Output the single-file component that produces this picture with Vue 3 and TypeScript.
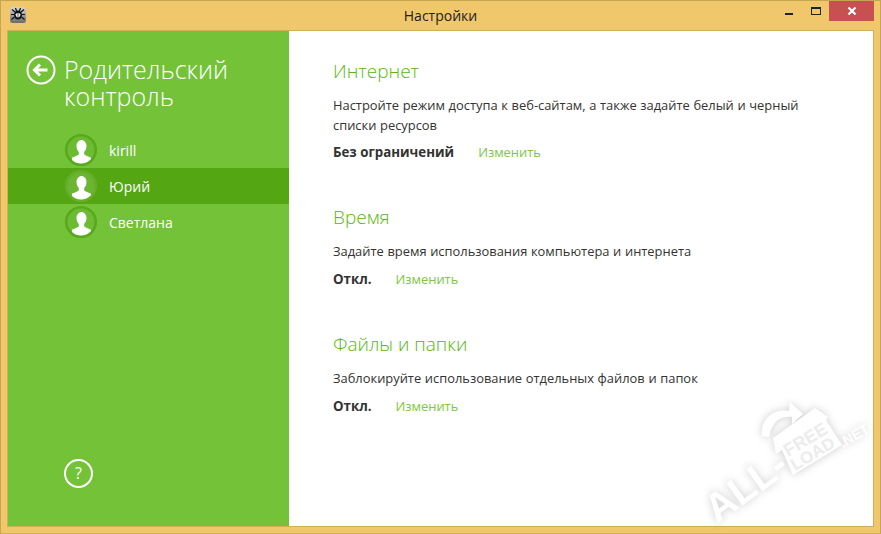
<script setup lang="ts">
interface User { name: string; active?: boolean }
interface Section { title: string; text: string[]; status: string }
const users: User[] = [{ name: 'kirill' }, { name: 'Юрий', active: true }, { name: 'Светлана' }]
const sections: Section[] = [
  { title: 'Интернет', text: ['Настройте режим доступа к веб-сайтам, а также задайте белый и черный', 'списки ресурсов'], status: 'Без ограничений' },
  { title: 'Время', text: ['Задайте время использования компьютера и интернета'], status: 'Откл.' },
  { title: 'Файлы и папки', text: ['Заблокируйте использование отдельных файлов и папок'], status: 'Откл.' },
]
</script>

<template>
  <div class="window">
    <header class="titlebar">
      <svg class="appicon" width="16" height="16" viewBox="0 0 16 16">
        <defs>
          <linearGradient id="tile" x1="0" y1="0" x2="0" y2="1">
            <stop offset="0" stop-color="#d8d8d8" />
            <stop offset="1" stop-color="#6a6a6a" />
          </linearGradient>
        </defs>
        <rect width="16" height="16" rx="2.500" fill="url(#tile)" />
        <path d="M2 2.500l3 2.500M14 2.500l-3 2.500M1 7.500h3.500M15 7.500h-3.500M1.500 12.500l3-2.500M14.500 12.500l-3-2.500M5.500 1l1 3M10.500 1l-1 3" stroke="#111" stroke-width="1.200" fill="none" />
        <ellipse cx="8" cy="8" rx="4" ry="4.500" fill="#111" />
        <path d="M5.500 7.500c1-2 4-2 5 0-.5 2-1 3-2.500 3s-2-1-2.500-3z" fill="#eee" />
        <path d="M8 5.500v5" stroke="#333" stroke-width=".8" />
      </svg>
      <div class="title">Настройки</div>
      <div class="controls">
        <div class="ctl"><span class="min"></span></div>
        <div class="ctl"><span class="max"></span></div>
        <div class="close">
          <svg width="10" height="10" viewBox="0 0 10 10"><path d="M1.500 1.500l7 7M8.500 1.500l-7 7" stroke="#fff" stroke-width="2.200" /></svg>
        </div>
      </div>
    </header>
    <div class="client">
      <aside class="side">
        <div class="head">
          <svg class="back" width="30" height="30" viewBox="0 0 30 30">
            <circle cx="15" cy="15" r="13.500" fill="none" stroke="#fff" stroke-width="2" />
            <path d="M21.500 15H9M14 9.500L8.500 15l5.500 5.500" fill="none" stroke="#fff" stroke-width="3" />
          </svg>
          <h1>Родительский<br />контроль</h1>
        </div>
        <ul class="users">
          <li v-for="u in users" :key="u.name" :class="{ active: u.active }">
            <svg class="avatar" width="34" height="34" viewBox="0 0 34 34">
              <defs><clipPath id="ac"><circle cx="17" cy="17" r="13.500" /></clipPath></defs>
              <circle cx="17" cy="17" r="14.800" :fill="u.active ? '#6cb532' : '#6dbb33'" :stroke="u.active ? '#64ae2a' : '#5aa91c'" stroke-width="2.600" />
              <g clip-path="url(#ac)">
                <path d="M17 7c3.300 0 5.500 2.700 5.500 6 0 2.400-1 4.700-2.300 5.900v2.500c1 1.200 5.400 2.200 6.800 3.400V32H8v-7.200c1.400-1.200 5.800-2.200 6.800-3.400v-2.500c-1.300-1.200-2.300-3.500-2.300-5.900 0-3.300 2.200-6 5.500-6z" fill="#fff" />
              </g>
            </svg>
            <span>{{ u.name }}</span>
          </li>
        </ul>
        <div class="help">?</div>
      </aside>
      <main class="main">
        <section v-for="s in sections" :key="s.title">
          <h2>{{ s.title }}</h2>
          <p v-for="t in s.text" :key="t">{{ t }}</p>
          <div class="row" :class="{ single: s.text.length === 1 }"><b>{{ s.status }}</b><a>Изменить</a></div>
        </section>
        <svg class="mark" width="172" height="132" viewBox="0 0 172 132">
          <g class="wm" fill="#fff" font-family="Liberation Sans" font-weight="700">
            <path d="M61 42C59 24 74 14 88 17l1-9 13 12-11 10 0-7C78 21 70 30 68 43z" />
            <path d="M114 14l13 9-2 3 16 25-49 30-11-25-6 4-3-16z" />
            <text transform="translate(16 130) rotate(-36)" font-size="40">ALL-</text>
            <text transform="translate(142 54) rotate(-31)" font-size="14">.NET</text>
          </g>
          <g fill="#ececec" font-family="Liberation Sans" font-weight="700">
            <text transform="translate(87 63) rotate(-31)" font-size="18">FREE</text>
            <text transform="translate(94 77) rotate(-31)" font-size="17">LOAD</text>
          </g>
        </svg>
      </main>
    </div>
  </div>
</template>

<style scoped>
.window { width: 881px; height: 534px; box-sizing: border-box; border: 1px solid #c7a650; border-bottom-color: #d3b055; background: #f0c76b; display: flex; flex-direction: column; padding: 0 6px 6px; font-family: "Open Sans", "Noto Sans", sans-serif; overflow: hidden; }
.titlebar { height: 29px; flex: none; display: flex; align-items: center; position: relative; }
.appicon { margin: 0 0 1px 3px; }
.title { position: absolute; left: 0; right: 0; top: 5px; text-align: center; font-size: 14px; line-height: 19px; color: #222; }
.controls { position: absolute; right: 0; top: 0; display: flex; height: 20px; }
.ctl { width: 26px; height: 20px; display: flex; align-items: center; justify-content: center; }
.min { width: 8px; height: 2px; background: #222; margin: 6px 2px 0 0; }
.max { width: 8px; height: 5px; border: 1px solid #222; border-top-width: 2px; }
.close { width: 45px; height: 20px; background: #c75050; display: flex; align-items: center; justify-content: center; }
.client { flex: 1; display: flex; border: 1px solid #d0ae5a; min-height: 0; background: #fff; }
.side { width: 281px; flex: none; background: #74c238; color: #fff; display: flex; flex-direction: column; position: relative; }
.head { display: flex; padding: 24px 0 0 18px; height: 70px; }
h1 { margin: 1px 0 0 8px; font-size: 25px; line-height: 27px; font-weight: 300; }
.users { list-style: none; margin: 7px 0 0; padding: 0; }
.users li { height: 36px; display: flex; align-items: center; padding-left: 56px; font-size: 14px; }
.users li.active { background: #54a612; }
.avatar { flex: none; margin-right: 11px; }
.help { position: absolute; left: 56px; bottom: 38px; width: 25px; height: 25px; border: 2px solid #fff; border-radius: 50%; text-align: center; font-size: 16px; line-height: 25px; }
.main { flex: 1; padding: 27px 0 0 44px; position: relative; color: #333; }
section { margin-bottom: 42px; }
h2 { margin: 0 0 11px; font-size: 19px; line-height: 26px; font-weight: 300; color: #58b80c; }
p { margin: 0; font-size: 12.900px; word-spacing: 0.300px; line-height: 20px; }
.row { margin-top: 7px; font-size: 13px; line-height: 20px; display: flex; gap: 24px; }
.row.single { margin-top: 8px; }
.row a { color: #7cc83a; font-size: 12.900px; }
.row b { color: #333; font-size: 13.300px; }
.mark { position: absolute; right: 0; bottom: 0; overflow: visible; }
.wm { filter: drop-shadow(0 0 4px rgba(0, 0, 0, 0.2)); }
</style>
